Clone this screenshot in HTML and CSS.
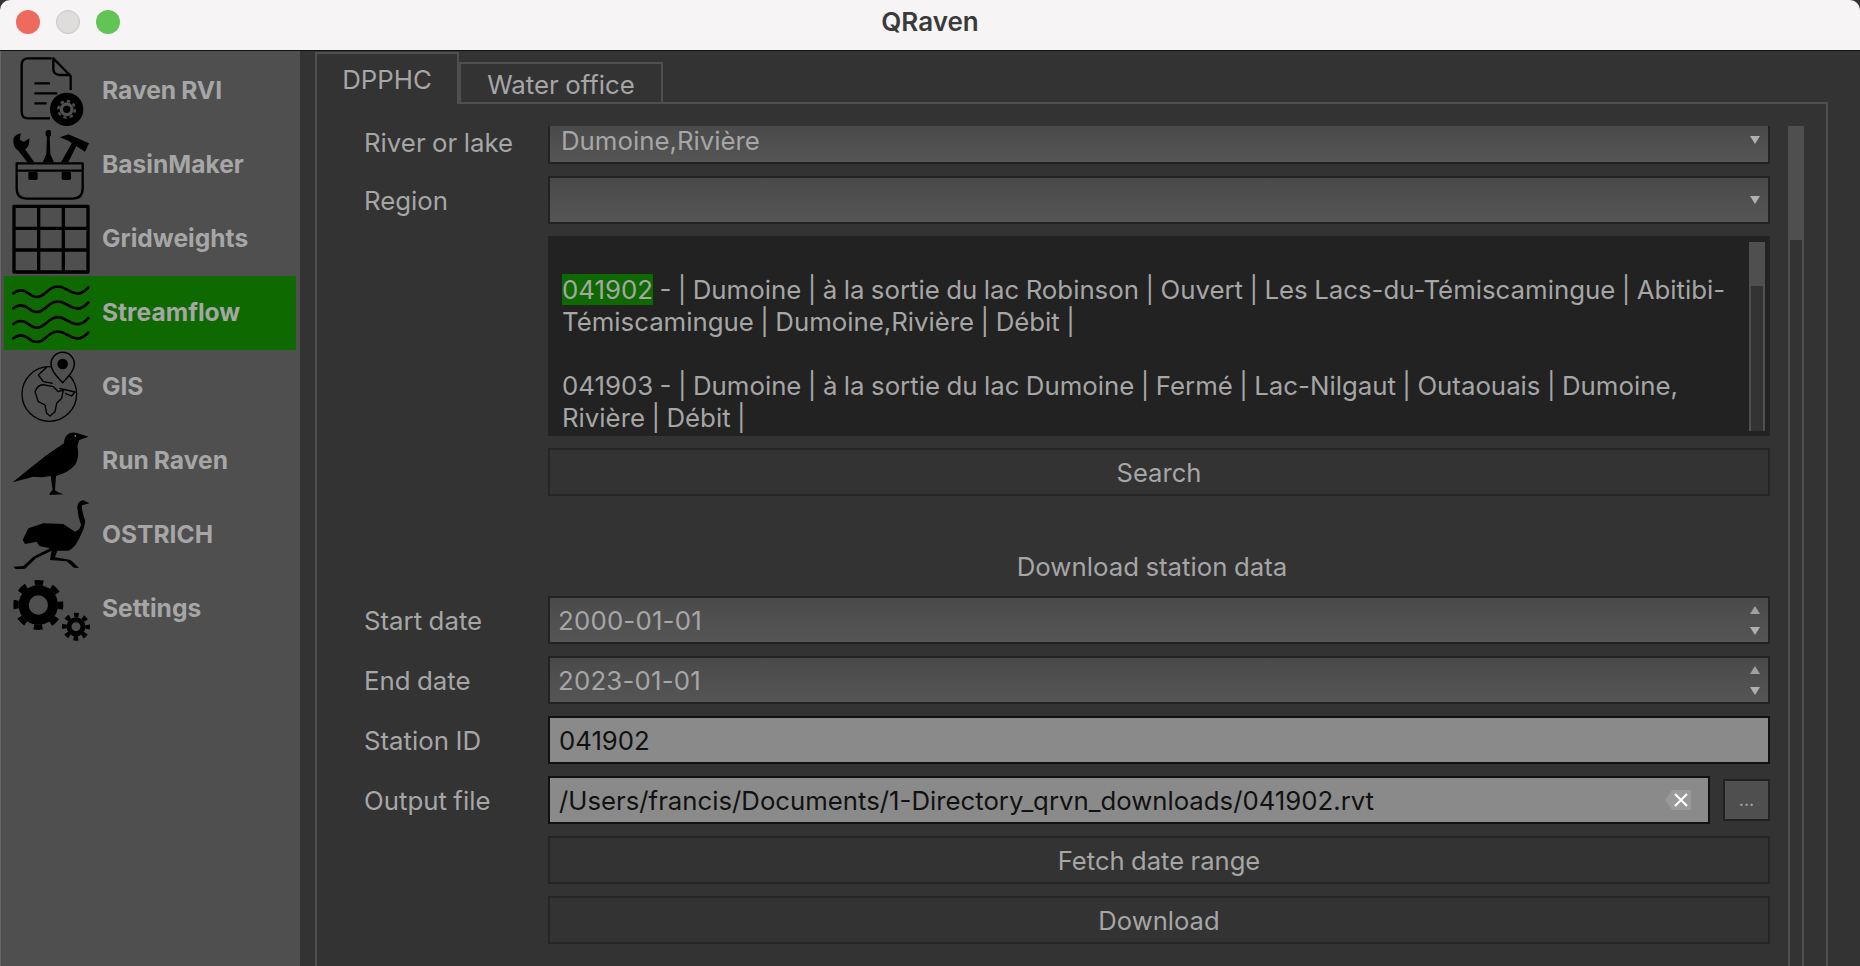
FILE: index.html
```html
<!DOCTYPE html>
<html lang="en">
<head>
  <meta charset="UTF-8" />
  <title>QRaven</title>
  <link rel="stylesheet" href="styles.css">
</head>
<body>
  <header class="titlebar">
    <div class="lights">
      <span class="light red"></span>
      <span class="light grey"></span>
      <span class="light green"></span>
    </div>
    <h1>QRaven</h1>
  </header>

  <div class="window">
    <nav class="sidebar">
      <a class="nav-item">
        <svg class="icon" viewBox="30 162 240 222">
          <path class="line" d="M155 175H85Q65 175 65 195V335Q65 355 85 355H150M212 270V228L160 175V205Q160 225 180 225H212"/>
          <path class="line" d="M103 250H150M103 280H172M103 310H140"/>
          <circle cx="200" cy="328" r="50"/>
          <circle class="cut" cx="200" cy="328" r="16" stroke-width="10"/>
          <circle class="cut" cx="200" cy="328" r="25" stroke-width="7" stroke-dasharray="10 9.6"/>
        </svg>
        <span>Raven RVI</span>
      </a>
      <a class="nav-item">
        <svg class="icon" viewBox="30 384 240 222">
          <path class="line" d="M50 490H248V565Q248 596 218 596H80Q50 596 50 565ZM50 512H248"/>
          <rect x="85" y="515" width="28" height="25" rx="5"/>
          <rect x="185" y="515" width="28" height="25" rx="5"/>
          <path d="M40 425Q38 405 62 400L60 420 72 425 88 415Q90 440 75 448L103 487H82L55 452Q42 445 40 425Z"/>
          <rect x="137" y="390" width="16" height="20" rx="6"/>
          <path d="M141 405H149L151 462 162 487H128L139 462Z"/>
          <path d="M183 487 216 428 230 436 205 487Z"/>
          <path d="M180 412 205 403 267 430 255 455 225 436 205 422Z"/>
        </svg>
        <span>BasinMaker</span>
      </a>
      <a class="nav-item">
        <svg class="icon" viewBox="30 606 240 222">
          <path class="line heavy" d="M42 619H264V816H42ZM116 619V816M190 619V816M42 685H264M42 750H264"/>
        </svg>
        <span>Gridweights</span>
      </a>
      <a class="nav-item active">
        <svg class="icon" viewBox="30 828 240 222">
          <path class="wave" d="M40 880C55 868 70 868 85 880S115 898 135 880 170 852 195 866 240 892 265 862"/>
          <path class="wave" d="M40 925C55 913 70 913 85 925S115 943 135 925 170 897 195 911 240 937 265 907"/>
          <path class="wave" d="M40 972C55 960 70 960 85 972S115 990 135 972 170 944 195 958 240 984 265 954"/>
          <path class="wave" d="M40 1015C55 1003 70 1003 85 1015S115 1033 135 1015 170 987 195 1001 240 1027 265 997"/>
        </svg>
        <span>Streamflow</span>
      </a>
      <a class="nav-item">
        <svg class="icon" viewBox="30 30 240 222">
          <circle class="thin" cx="148" cy="162" r="82"/>
          <path class="thin" d="M105 155Q115 130 135 135L160 140 175 155 190 150 185 175 170 190 165 215 150 228 140 220 135 195 115 185ZM140 82 115 105 130 125 158 130M178 145 200 150 225 156 215 168 195 160"/>
          <path class="pin" d="M188 128C170 108 153 92 153 72A35 35 0 0 1 223 72C223 92 206 108 188 128Z"/>
          <circle cx="188" cy="72" r="16"/>
        </svg>
        <span>GIS</span>
      </a>
      <a class="nav-item">
        <svg class="icon" viewBox="30 252 240 222">
          <path d="M266 290 240 282Q225 274 208 280 192 288 192 310L140 345 90 385 38 427 100 410 125 412 152 408 158 450 150 458 148 465 190 463 172 456 165 450 168 408Q205 398 225 375 240 350 232 318L238 300Z"/>
          <circle class="eye" cx="226" cy="288" r="2.5"/>
        </svg>
        <span>Run Raven</span>
      </a>
      <a class="nav-item">
        <svg class="icon" viewBox="30 474 240 222">
          <path d="M268 490 250 481Q236 482 232 498 232 525 243 555 240 570 225 575L190 552 130 550 85 565 68 600 75 612 110 605 118 618 150 625 100 650 70 678 40 680 48 688 75 686 108 655 155 632 150 660 200 664 222 683 237 684 212 660 165 652 172 632 205 632Q225 625 240 590 258 555 255 540 244 510 246 496Z"/>
        </svg>
        <span>OSTRICH</span>
      </a>
      <a class="nav-item">
        <svg class="icon" viewBox="30 696 240 222">
          <circle class="gear" cx="115" cy="795" r="44" stroke-width="30"/>
          <circle class="gear" cx="115" cy="795" r="67" stroke-width="16" stroke-dasharray="26 26.6" stroke-dashoffset="13"/>
          <circle class="gear" cx="228" cy="860" r="21" stroke-width="15"/>
          <circle class="gear" cx="228" cy="860" r="35" stroke-width="14" stroke-dasharray="14 13.5" stroke-dashoffset="7"/>
        </svg>
        <span>Settings</span>
      </a>
    </nav>

    <main class="content">
      <div class="tabs">
        <div class="tab active">DPPHC</div>
        <div class="tab">Water office</div>
      </div>
      <section class="pane">
        <div class="form">
          <label class="field-label clipped-label">River or lake</label>
          <div class="combo clipped"><span>Dumoine,Rivière</span><i class="arrow-down"></i></div>

          <label class="field-label">Region</label>
          <div class="combo"><span></span><i class="arrow-down"></i></div>

          <div class="results field">
            <div class="results-text">
              <p><mark>041902</mark> - | Dumoine | à la sortie du lac Robinson | Ouvert | Les Lacs-du-Témiscamingue | Abitibi-<br>Témiscamingue | Dumoine,Rivière | Débit |</p>
              <p>041903 - | Dumoine | à la sortie du lac Dumoine | Fermé | Lac-Nilgaut | Outaouais | Dumoine,<br>Rivière | Débit |</p>
            </div>
            <div class="scrollbar"><div class="thumb small"></div></div>
          </div>

          <button class="btn field">Search</button>

          <div class="section-title field">Download station data</div>

          <label class="field-label">Start date</label>
          <div class="combo date"><span>2000-01-01</span><div class="spin"><i class="arrow-up"></i><i class="arrow-down"></i></div></div>

          <label class="field-label">End date</label>
          <div class="combo date"><span>2023-01-01</span><div class="spin"><i class="arrow-up"></i><i class="arrow-down"></i></div></div>

          <label class="field-label">Station ID</label>
          <div class="edit"><span>041902</span></div>

          <label class="field-label">Output file</label>
          <div class="file-row">
            <div class="edit grow">
              <span>/Users/francis/Documents/1-Directory_qrvn_downloads/041902.rvt</span>
              <svg class="clear" viewBox="0 0 26 20">
                <path class="clear-bg" d="M7 0H26V20H7L0 10Z"/>
                <path class="clear-x" d="M10 4 22 16M22 4 10 16"/>
              </svg>
            </div>
            <button class="browse">...</button>
          </div>

          <button class="btn field">Fetch date range</button>
          <button class="btn field">Download</button>
        </div>
        <div class="scrollbar outer"><div class="thumb"></div></div>
      </section>
    </main>
  </div>
</body>
</html>
```

FILE: styles.css
```css
* {
  box-sizing: border-box;
}
html, body {
  height: 100%;
}
body {
  margin: 0;
  overflow: hidden;
  display: flex;
  flex-direction: column;
  font-family: Inter, "Liberation Sans", sans-serif;
  font-size: 25.8px;
  word-spacing: -0.8px;
  color: #a6a6a6;
  background-color: #333;
}

/* title bar */
.titlebar {
  flex: 0 0 51px;
  position: relative;
  display: flex;
  align-items: center;
  justify-content: center;
  background-color: #f7f4f5;
  border-bottom: 1px solid #111;
  border-radius: 10px 10px 0 0;
}
.titlebar h1 {
  margin: 0 0 8px;
  font-size: 26px;
  font-weight: 600;
  color: #3a3a3a;
}
.lights {
  position: absolute;
  left: 16px;
  top: 10px;
  display: flex;
  gap: 16px;
}
.light {
  width: 24px;
  height: 24px;
  border-radius: 50%;
}
.light.red {
  background-color: #ee6a5f;
}
.light.grey {
  background-color: #dfdcdc;
  border: 1px solid #c8c5c5;
}
.light.green {
  background-color: #61c454;
}

.window {
  flex: 1;
  display: flex;
  min-height: 0;
}

/* left navigation */
.sidebar {
  flex: 0 0 300px;
  padding: 3px 4px 0 3px;
  background-color: #4f4f4f;
  border-left: 1px solid #666;
}
.nav-item {
  display: flex;
  align-items: center;
  height: 74px;
  padding-left: 6px;
  font-size: 24.6px;
  font-weight: 700;
  color: #a6a6a6;
}
.nav-item span {
  margin-left: 12px;
  padding-bottom: 2px;
}
.nav-item.active {
  background-color: #0e6900;
}
.icon {
  width: 80px;
  height: 74px;
  flex: none;
}
.line {
  fill: none;
  stroke: #000;
  stroke-width: 7;
  stroke-linejoin: round;
}
.line.heavy {
  stroke-width: 10;
}
.wave {
  fill: none;
  stroke: #000;
  stroke-width: 8;
  stroke-linecap: round;
}
.thin {
  fill: none;
  stroke: #000;
  stroke-width: 4;
  stroke-linejoin: round;
}
.pin {
  fill: #4f4f4f;
  stroke: #000;
  stroke-width: 4.5;
}
.cut {
  fill: none;
  stroke: #4f4f4f;
}
.eye {
  fill: #aaa;
}
.gear {
  fill: none;
  stroke: #000;
}

/* tabs and pane */
.content {
  flex: 1;
  min-width: 0;
  display: flex;
  flex-direction: column;
  padding: 1px 32px 0 15px;
}
.tabs {
  flex: none;
  display: flex;
  align-items: flex-end;
  height: 52px;
  margin-bottom: -2px;
}
.tab {
  width: 204px;
  height: 42px;
  padding-top: 5px;
  text-align: center;
  border: 2px solid #4f4f4f;
  background-color: #333;
}
.tab.active {
  position: relative;
  width: 144px;
  height: 52px;
  padding-top: 10px;
  border-bottom: 0;
}
.pane {
  flex: 1;
  min-height: 0;
  display: flex;
  gap: 18px;
  padding: 22px 22px 0 47px;
  border: 2px solid #4f4f4f;
  border-bottom: 0;
}
.form {
  flex: none;
  display: grid;
  grid-template-columns: 184px 1222px;
  grid-auto-rows: min-content;
  row-gap: 12px;
  align-items: center;
}
.field {
  grid-column: 2;
}
.clipped-label {
  padding-bottom: 6px;
}

/* inputs */
.combo {
  display: flex;
  align-items: center;
  justify-content: space-between;
  height: 48px;
  padding: 0 8px 0 11px;
  border: 2px solid #222;
  background: linear-gradient(#4a4a4a, #555);
}
.combo.clipped {
  height: 38px;
  padding-bottom: 8px;
  border-top: 0;
}
.combo.date {
  padding-left: 8px;
  letter-spacing: 0.2px;
}
.arrow-down, .arrow-up {
  display: block;
  width: 0;
  height: 0;
  border-left: 5px solid transparent;
  border-right: 5px solid transparent;
}
.arrow-down {
  border-top: 8px solid #b0b0b0;
}
.arrow-up {
  border-bottom: 8px solid #a0a0a0;
}
.spin {
  display: flex;
  flex-direction: column;
  gap: 13px;
}
.edit {
  display: flex;
  align-items: center;
  justify-content: space-between;
  height: 48px;
  padding: 0 17px 0 9px;
  color: #111;
  background-color: #8a8a8a;
  border: 2px solid #111;
}
.edit span {
  font-size: 25.75px;
}
.grow {
  flex: 1;
}
.clear {
  width: 26px;
  height: 20px;
}
.clear-bg {
  fill: #9a9a9a;
}
.clear-x {
  fill: none;
  stroke: #fff;
  stroke-width: 2;
}
.file-row {
  display: flex;
  align-items: center;
  gap: 13px;
}
.browse {
  width: 47px;
  height: 42px;
  padding: 0 0 2px;
  font-family: inherit;
  font-size: 18px;
  color: #a6a6a6;
  background-color: #4f4f4f;
  border: 2px solid #222;
}
.btn {
  height: 48px;
  padding: 0;
  font-family: inherit;
  font-size: 25.6px;
  word-spacing: inherit;
  color: #a6a6a6;
  background-color: #333;
  border: 2px solid #262626;
}
.section-title {
  height: 76px;
  padding: 41px 14px 0 0;
  line-height: 36px;
  text-align: center;
}

/* station results */
.results {
  display: flex;
  justify-content: space-between;
  height: 200px;
  overflow: hidden;
  background-color: #222;
}
.results-text {
  padding: 38px 0 0 14px;
  line-height: 32px;
  white-space: nowrap;
}
.results-text p {
  margin: 0 0 32px;
}
mark {
  color: inherit;
  background-color: #0e6900;
}

/* scrollbars */
.scrollbar {
  flex: none;
  width: 16px;
  margin: 6px 5px 5px 0;
  background-color: #333;
  border-left: 2px solid #4f4f4f;
  border-right: 2px solid #4f4f4f;
}
.scrollbar.outer {
  margin: 0;
}
.thumb {
  height: 114px;
  margin: 0 -2px;
  background-color: #4f4f4f;
}
.thumb.small {
  height: 44px;
}
```
